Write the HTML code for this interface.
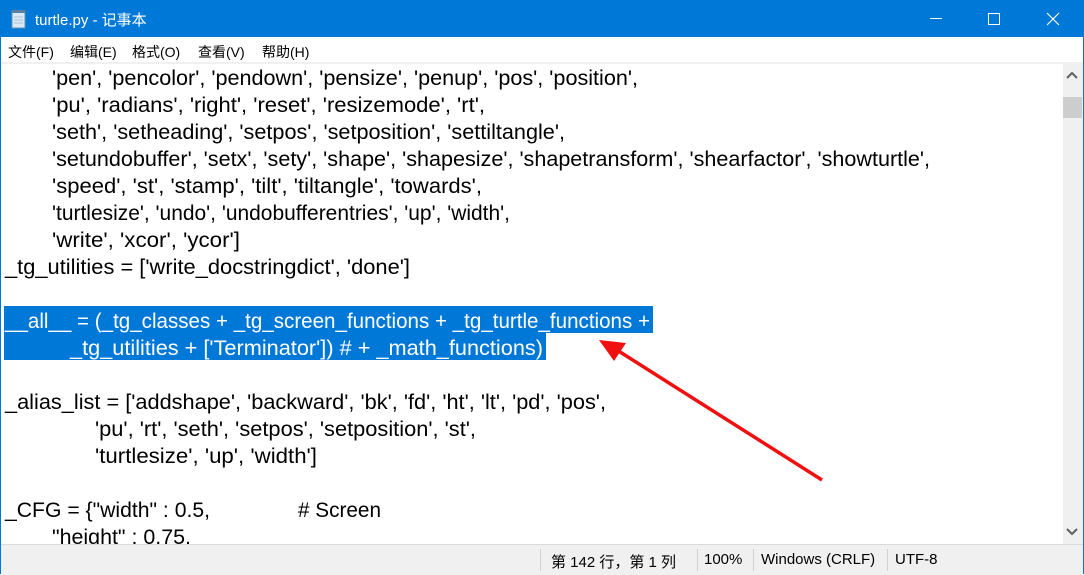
<!DOCTYPE html>
<html><head><meta charset="utf-8"><style>
body{margin:0;width:1084px;height:574px;overflow:hidden;background:#fff;font-family:"Liberation Sans","Noto Sans CJK SC",sans-serif;position:relative}
.abs{position:absolute}
#title{left:0;top:0;width:1084px;height:37px;background:#0078d7;color:#fff}
#menu{left:1px;top:37px;width:1082px;height:25px;background:#fff;font-size:14px}
#menu span{position:absolute;top:5px}
#sep{left:1px;top:62px;width:1082px;height:2px;background:#f0f0f0}
#status{left:1px;top:544px;width:1082px;height:30px;background:#f0f0f0;border-top:1px solid #dadada;font-size:15px;color:#000}
#status span{position:absolute;top:6px}
.vs{position:absolute;top:4px;width:1px;height:22px;background:#d0d0d0}
</style></head><body>
<div class="abs" id="title">
 <svg class="abs" style="left:10px;top:9px" width="18" height="20" viewBox="0 0 18 20"><rect x="2" y="2" width="13" height="17" fill="#d8eaf5" stroke="#6a8fb0"/><rect x="2" y="1" width="13" height="3" fill="#5b7fa0"/><path d="M4 8h9M4 11h9M4 14h9" stroke="#a9c3d8"/></svg>
 <span class="abs" style="left:35px;top:9px;font-size:15px">turtle.py - 记事本</span>
 <div class="abs" style="left:930px;top:18px;width:12px;height:1px;background:#fff"></div>
 <div class="abs" style="left:988px;top:13px;width:10px;height:10px;border:1px solid #fff"></div>
 <svg class="abs" style="left:1046px;top:12px" width="14" height="14"><path d="M1 1L13 13M13 1L1 13" stroke="#fff" stroke-width="1.2"/></svg>
</div>
<div class="abs" style="left:0;top:37px;width:1px;height:537px;background:#0078d7"></div>
<div class="abs" style="left:1083px;top:37px;width:1px;height:537px;background:#0078d7"></div>
<div class="abs" id="menu"><span style="left:7px">文件(F)</span><span style="left:69px">编辑(E)</span><span style="left:131px">格式(O)</span><span style="left:197px">查看(V)</span><span style="left:261px">帮助(H)</span></div>
<div class="abs" id="sep"></div>
<svg class="abs" style="left:1px;top:64px" width="1062" height="480">
<g font-family="Liberation Sans, sans-serif" font-size="21" fill="#000" lengthAdjust="spacingAndGlyphs">
<rect x="3" y="242" width="649" height="27" fill="#0078d7"/>
<rect x="3" y="269" width="542" height="27" fill="#0078d7"/>
<text x="51" y="21" textLength="586" lengthAdjust="spacingAndGlyphs">'pen', 'pencolor', 'pendown', 'pensize', 'penup', 'pos', 'position',</text>
<text x="51" y="48" textLength="433" lengthAdjust="spacingAndGlyphs">'pu', 'radians', 'right', 'reset', 'resizemode', 'rt',</text>
<text x="51" y="75" textLength="513" lengthAdjust="spacingAndGlyphs">'seth', 'setheading', 'setpos', 'setposition', 'settiltangle',</text>
<text x="51" y="102" textLength="878" lengthAdjust="spacingAndGlyphs">'setundobuffer', 'setx', 'sety', 'shape', 'shapesize', 'shapetransform', 'shearfactor', 'showturtle',</text>
<text x="51" y="129" textLength="430" lengthAdjust="spacingAndGlyphs">'speed', 'st', 'stamp', 'tilt', 'tiltangle', 'towards',</text>
<text x="51" y="156" textLength="458" lengthAdjust="spacingAndGlyphs">'turtlesize', 'undo', 'undobufferentries', 'up', 'width',</text>
<text x="51" y="183" textLength="188" lengthAdjust="spacingAndGlyphs">'write', 'xcor', 'ycor']</text>
<text x="4" y="210" textLength="405" lengthAdjust="spacingAndGlyphs">_tg_utilities = ['write_docstringdict', 'done']</text>
<text x="4" y="264" textLength="645" lengthAdjust="spacingAndGlyphs" fill="#fff">__all__ = (_tg_classes + _tg_screen_functions + _tg_turtle_functions +</text>
<text x="69" y="291" textLength="473" lengthAdjust="spacingAndGlyphs" fill="#fff">_tg_utilities + ['Terminator']) # + _math_functions)</text>
<text x="4" y="345" textLength="601" lengthAdjust="spacingAndGlyphs">_alias_list = ['addshape', 'backward', 'bk', 'fd', 'ht', 'lt', 'pd', 'pos',</text>
<text x="94" y="372" textLength="381" lengthAdjust="spacingAndGlyphs">'pu', 'rt', 'seth', 'setpos', 'setposition', 'st',</text>
<text x="94" y="399" textLength="222" lengthAdjust="spacingAndGlyphs">'turtlesize', 'up', 'width']</text>
<text x="4" y="453" textLength="205" lengthAdjust="spacingAndGlyphs">_CFG = {"width" : 0.5,</text>
<text x="297" y="453" textLength="83" lengthAdjust="spacingAndGlyphs"># Screen</text>
<text x="51" y="480" textLength="139" lengthAdjust="spacingAndGlyphs">"height" : 0.75,</text>
</g>
<path d="M821 416L608 281" stroke="#f01010" stroke-width="3.5"/>
<path d="M598 276L625 279L613 297Z" fill="#f01010"/>
</svg>
<div class="abs" style="left:1063px;top:63px;width:20px;height:481px;background:#f0f0f0"></div>
<svg class="abs" style="left:1066px;top:71px" width="12" height="8"><path d="M1 7L6 2L11 7" stroke="#606060" stroke-width="2" fill="none"/></svg>
<div class="abs" style="left:1063px;top:97px;width:19px;height:21px;background:#cdcdcd"></div>
<svg class="abs" style="left:1066px;top:528px" width="12" height="8"><path d="M1 1L6 6L11 1" stroke="#606060" stroke-width="2" fill="none"/></svg>
<div class="abs" id="status">
<div class="vs" style="left:539px"></div><div class="vs" style="left:696px"></div><div class="vs" style="left:752px"></div><div class="vs" style="left:886px"></div>
<span style="left:550px">第 142 行，第 1 列</span><span style="left:703px">100%</span><span style="left:760px">Windows (CRLF)</span><span style="left:894px">UTF-8</span>
</div>
</body></html>
